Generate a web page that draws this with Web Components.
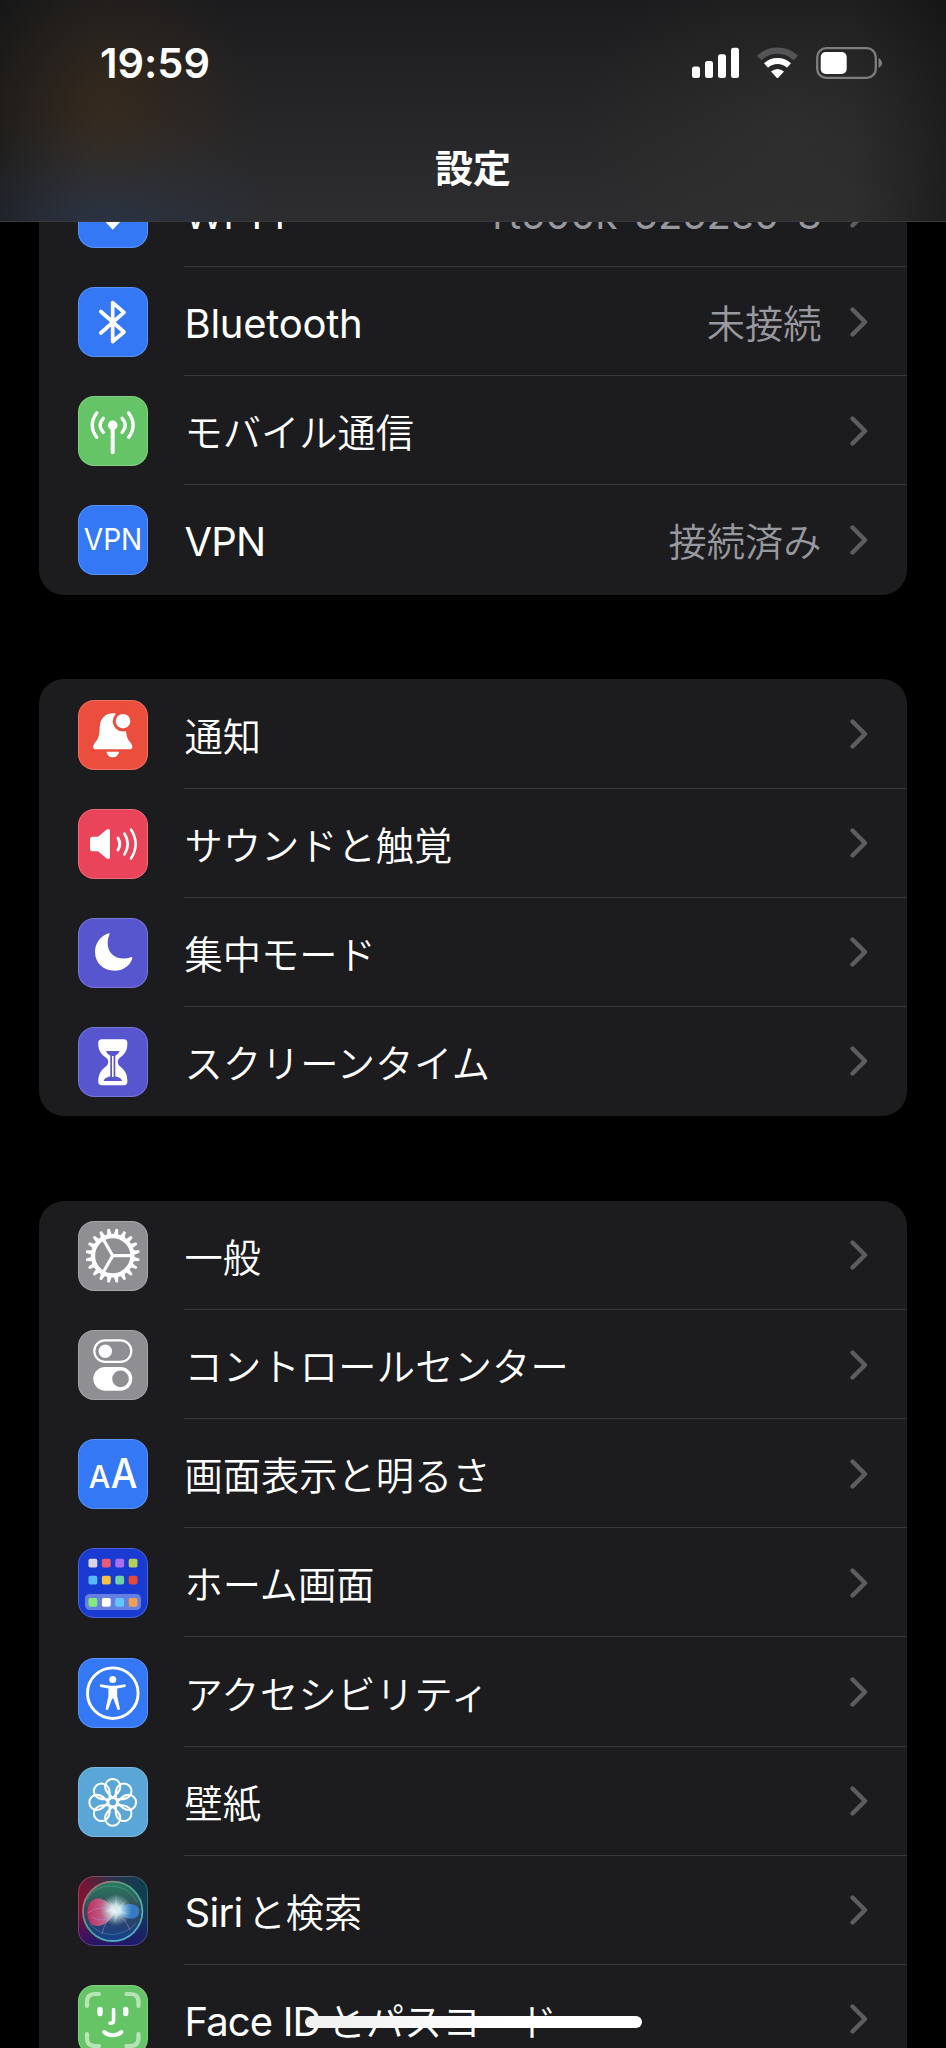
<!DOCTYPE html>
<html lang="ja">
<head>
<meta charset="utf-8">
<title>設定</title>
<style>
html,body{margin:0;background:#000}
body{width:946px;height:2048px;overflow:hidden;font-family:"Noto Sans CJK JP",sans-serif;color:#fff}
</style>
</head>
<body>
<settings-screen>
  <settings-group>
    <settings-row icon="wifi"><latin-text size="40" width="100">Wi-Fi</latin-text><latin-text slot="value" size="40" width="329">rt500k-5252e0-3</latin-text></settings-row>
    <settings-row icon="bluetooth"><latin-text size="40" width="178">Bluetooth</latin-text><span slot="value">未接続</span></settings-row>
    <settings-row icon="cellular">モバイル通信</settings-row>
    <settings-row icon="vpn"><latin-text size="40" width="81">VPN</latin-text><span slot="value">接続済み</span></settings-row>
  </settings-group>
  <settings-group>
    <settings-row icon="bell">通知</settings-row>
    <settings-row icon="sound">サウンドと触覚</settings-row>
    <settings-row icon="moon">集中モード</settings-row>
    <settings-row icon="hourglass" spacing=".3">スクリーンタイム</settings-row>
  </settings-group>
  <settings-group>
    <settings-row icon="gear">一般</settings-row>
    <settings-row icon="toggles" spacing=".2">コントロールセンター</settings-row>
    <settings-row icon="display">画面表示と明るさ</settings-row>
    <settings-row icon="home">ホーム画面</settings-row>
    <settings-row icon="access" spacing=".4">アクセシビリティ</settings-row>
    <settings-row icon="flower">壁紙</settings-row>
    <settings-row icon="siri"><latin-text size="40" width="58" style="margin-right:5px">Siri</latin-text>と検索</settings-row>
    <settings-row icon="face"><latin-text size="40" width="136" style="margin-right:7px">Face ID</latin-text>とパスコード</settings-row>
  </settings-group>
</settings-screen>

<script>
const range = n => Array.from({length:n},(_,i)=>i);
const homeColors = ['#d8d8dc','#ea5a72','#ab70f2','#b6d05c','#57b9f7','#f8bf45','#6cd2a8','#e84a3a','#86ea78','#ffffff','#62c6fa','#f1a052'];
const ICONS = {
wifi:['#3478f6',`<g fill="none" stroke="#fff" stroke-width="5.4"><path d="M14.5 30.5A29 29 0 0 1 55.5 30.5"/><path d="M22 38.5A18.500 18.500 0 0 1 48 38.500"/></g><path d="M27.500 44A10.500 10.500 0 0 1 42 44L34.800 51.700Z" fill="#fff"/>`],
bluetooth:['#3478f6',`<path d="M22.800 24.500L46 45L34.700 54.500V15.700L46 25.300L22.800 46" fill="none" stroke="#fff" stroke-width="3.700" stroke-linecap="round" stroke-linejoin="round"/>`],
cellular:['#65c466',`<circle cx="34.700" cy="29.300" r="4.800" fill="#fff"/><g fill="none" stroke="#fff" stroke-linecap="round" stroke-width="3.400"><path d="M34.700 30V56.300" stroke-width="4"/><path d="M25.300 22.300Q18.700 29.300 25.300 36.300M44.100 22.300Q50.700 29.300 44.100 36.300M18.700 17Q9.800 29.300 18.700 41.300M50.700 17Q59.600 29.300 50.700 41.300"/></g>`],
vpn:['#3478f6',`<text x="5.800" y="45" textLength="58.500" lengthAdjust="spacingAndGlyphs" font-family="Inter,sans-serif" font-size="30" fill="#fff">VPN</text>`],
bell:['#eb4e3d',`<path d="M34.700 13.300C27.500 13.300 22.300 18.600 21.800 26.500C21.500 33.500 21 38 17.500 42C14 46.300 14.500 49.300 18 49.300H51.500C55 49.300 55.500 46.300 52 42C48.400 38 48.200 33.500 47.700 26.500C47.200 18.600 42 13.300 34.700 13.300Z" fill="#fff"/><path d="M28.500 51.700H41.200C40 55.700 38 57.300 34.800 57.300C31.500 57.300 29.500 55.700 28.500 51.700Z" fill="#fff"/><circle cx="45" cy="21.200" r="10.300" fill="#eb4e3d"/><circle cx="45" cy="21.200" r="7.300" fill="#fff"/>`],
sound:['#ea445a',`<path d="M14.500 27.800H20L28.500 20.700C30.500 19.300 32 20 32 22V48C32 50 30.500 50.700 28.500 49.300L20 42.300H14.500Q12 42.300 12 39.800V30.300Q12 27.800 14.500 27.800Z" fill="#fff"/><g fill="none" stroke="#fff" stroke-width="3" stroke-linecap="round"><path d="M40 29Q43.500 35 40 41"/><path d="M46.500 24.800Q53 35 46.500 45.200" stroke-width="2.800"/><path d="M53 20.500Q62.300 35 53 49.500" stroke-width="2.600"/></g>`],
moon:['#5856ce',`<path d="M30.700 15.300C22.500 17.800 17 25.500 17 34C17 44.800 25.500 52.700 36.500 52.700C44.500 52.700 51.500 48.300 54.200 41Q54.900 38.700 52.500 39.200C50 40.300 47.500 40.500 45.500 40.500C36 40.500 29.700 34.500 29.700 25C29.700 22 30.300 19 31.500 16.500Q31.900 15 30.700 15.300Z" fill="#fff"/>`],
hourglass:['#5856ce',`<path d="M24 12.300H45.700Q49.400 12.300 49.400 16C49.400 25 46 27.500 41 31.500Q38.500 34.500 41 38.500C46 42.500 49.400 46 49.400 54.500Q49.400 58.300 45.700 58.300H24Q20.200 58.300 20.200 54.500C20.200 46 24 42.500 29 38.500Q31.500 34.500 29 31.500C24 27.500 20.200 25 20.200 16Q20.200 12.300 24 12.300Z" fill="#fff"/><path d="M28 24H41.700Q40.500 27 37.300 28.800V49.200C42 50.500 43.500 51.500 44 54H25.700C26.200 51.500 28 50.500 32.300 49.200V28.800Q29 27 28 24Z" fill="#5856ce"/><path d="M34.800 29V50" stroke="#fff" stroke-width="1.600"/>`],
gear:['#8e8e93',`<g transform="translate(34.700 34.700)" fill="none" stroke="#fff"><circle r="19.700" stroke-width="4.300"/><path d="M0 0H19M0 0L-9.500-16.500M0 0L-9.500 16.500" stroke-width="3.200"/>${range(20).map(i=>`<path transform="rotate(${i*18+9})" d="M-2.300-21L-1.200-27H1.200L2.300-21Z" fill="#fff" stroke="none"/>`).join('')}</g>`],
toggles:['#8e8e93',`<rect x="16.300" y="10.400" width="37" height="21.400" rx="10.700" fill="none" stroke="#fff" stroke-width="2.200"/><circle cx="27.300" cy="21.300" r="6.700" fill="#fff"/><rect x="15.300" y="37" width="39" height="23.700" rx="11.850" fill="#fff"/><circle cx="42.500" cy="48.900" r="8.300" fill="#8e8e93"/>`],
display:['#3478f6',`<g font-family="Inter,sans-serif" fill="#fff"><text x="10.800" y="49.300" font-size="31" textLength="21.500" lengthAdjust="spacingAndGlyphs" font-weight="500">A</text><text x="32.800" y="49.300" font-size="40.500" textLength="26.700" lengthAdjust="spacingAndGlyphs" font-weight="450">A</text></g>`],
home:['#1a3bd1',`<rect x="7" y="46" width="56" height="16" rx="4.500" fill="#667fe2"/>${homeColors.map((c,i)=>`<rect x="${10.5+(i%4)*13.4}" y="${[10.800,27.800,50][i>>2]}" width="8.800" height="8.800" rx="1.800" fill="${c}"/>`).join('')}`],
access:['#3478f6',`<circle cx="34.800" cy="35.200" r="25.300" fill="none" stroke="#fff" stroke-width="2.900"/><circle cx="34.800" cy="21.600" r="3.500" fill="#fff"/><path d="M22.400 26.200L31.500 27.800H38L47.200 26.200Q48.500 28 47.200 29L39.200 30.500V38L42 51Q41 52.500 39.500 51.700L35.300 40.500H34.300L30 51.700Q28.500 52.500 27.600 51L30.400 38V30.500L22.400 29Q21.100 28 22.400 26.200Z" fill="#fff"/>`],
flower:['#5aa7d7',`<g transform="translate(34.700 35.300)" fill="none" stroke="#fff" stroke-width="2">${range(8).map(i=>`<path transform="rotate(${i*45})" d="M0-4.500C-4-8-7.600-11-7.600-15.800A7.600 7.600 0 0 1 7.600-15.800C7.600-11 4-8 0-4.500Z"/>`).join('')}<circle r="4.300"/></g>`],
siri:['#1c2038',`<defs>
<linearGradient id="bg" x1="0" x2="1"><stop stop-color="#85102f"/><stop offset=".5" stop-color="#28344a"/><stop offset="1" stop-color="#0c4050"/></linearGradient>
<linearGradient id="low" x2="0" y2="1"><stop offset=".45" stop-color="#251080" stop-opacity="0"/><stop offset="1" stop-color="#201070" stop-opacity=".85"/></linearGradient>
<linearGradient id="orb" x2="0" y2="1"><stop stop-color="#287c60"/><stop offset=".5" stop-color="#354658"/><stop offset="1" stop-color="#143f91"/></linearGradient>
<linearGradient id="rim" x2="1" y2="1"><stop stop-color="#d05a68"/><stop offset=".45" stop-color="#4aa889"/><stop offset="1" stop-color="#56b3d8"/></linearGradient>
<radialGradient id="glow"><stop stop-color="#fff"/><stop offset=".3" stop-color="#e9fcff" stop-opacity=".95"/><stop offset="1" stop-color="#a2dce4" stop-opacity="0"/></radialGradient>
<linearGradient id="pink"><stop stop-color="#d72961"/><stop offset="1" stop-color="#d796b2"/></linearGradient></defs>
<rect width="70" height="70" fill="url(#bg)"/><rect width="70" height="70" fill="url(#low)"/>
<circle cx="34.700" cy="35.300" r="29.700" fill="url(#orb)" stroke="url(#rim)" stroke-width="1.800"/>
<path d="M9 24C18 5 48 5 59 26M12 48C24 62 45 62 58 47" stroke="#6dc5aa" stroke-opacity=".35" fill="none"/>
<path d="M38 35C32 27 26 22 19 22.500C7 24 6 46 16 49.500C27 52 33 43 38 35Z" fill="url(#pink)" opacity=".85"/>
<path d="M38 35C45 27 57 25 61 33C63 44 50 47 38 35Z" fill="#3688dc" opacity=".8"/>
<path d="M10 37Q22 27 38 36Q29 49 13 41M38 35Q27 44 24 58M38 36Q47 42 52 54" fill="none" stroke="#b494d1" opacity=".5"/>
<circle cx="38" cy="34" r="16" fill="url(#glow)" opacity=".85"/><path d="M38 18L39.500 31L48 25L41.500 34L51 38L41 37L37 47L36 37L26 35L35 32L29 23L37 30Z" fill="#e8fff9" opacity=".3"/>`],
face:['#65c466',`<g fill="none" stroke="#fff" stroke-linecap="round"><path d="M9 21V17Q9 9 17 9H21M48.500 9H52.500Q60.500 9 60.500 17V21M9 49V53Q9 61 17 61H21M48.500 61H52.500Q60.500 61 60.500 53V49" stroke-width="4.200" stroke="#b6e4b6"/><path d="M22 24.500V28.500M47.700 24.500V28.500" stroke-width="5.400"/><path d="M35.600 24.500V35.500Q35.600 38.300 32 38.300" stroke-width="3.600"/><path d="M26.200 47C30.500 51.300 39 51.300 43.400 47" stroke-width="4"/></g>`]
};

function define(name, markup, prepare){
  const t=document.createElement('template'); t.innerHTML=markup;
  customElements.define(name,class extends HTMLElement{
    connectedCallback(){
      if(this.shadowRoot)return;
      const content=t.content.cloneNode(true);
      if(prepare)prepare(this,content);
      this.attachShadow({mode:'open'}).append(content);
    }
  });
}

/* Latin runs use Inter; width sets the advance of the whole run through letter spacing. */
define('latin-text',`<style>:host{display:inline-block;white-space:nowrap;font-family:Inter,sans-serif;font-weight:400;line-height:1}</style><slot></slot>`,el=>{
  const size=el.getAttribute('size')||40, weight=el.getAttribute('weight')||400;
  el.style.fontSize=size+'px';
  el.style.fontWeight=weight;
  const want=+el.getAttribute('width');
  if(want){
    const c=document.createElement('canvas').getContext('2d');
    c.font=`${weight} ${size}px Inter`;
    el.style.letterSpacing=((want-c.measureText(el.textContent).width)/el.textContent.length).toFixed(3)+'px';
  }
});

define('app-icon',`<style>:host{display:block;flex:none;width:70px;height:70px;border-radius:16px;overflow:hidden;position:relative}svg{display:block}:host::after{content:"";position:absolute;inset:0;border-radius:16px;box-shadow:inset 0 0 0 1px rgba(255,255,255,.2)}</style><div class="art"></div>`,(el,content)=>{
  const [bg,art]=ICONS[el.getAttribute('name')];
  el.style.background=bg;
  content.querySelector('.art').innerHTML=`<svg width="70" height="70" viewBox="0 0 70 70">${art}</svg>`;
});

define('settings-row',`<style>
:host{display:flex;height:109.15px;padding-left:39px;box-sizing:border-box;align-items:center;gap:36px}
app-icon{margin-top:1px}
.body{flex:1;height:100%;box-sizing:border-box;display:flex;align-items:center;border-bottom:1px solid var(--line,#38383a);padding:2px 39.5px 0 .5px}
.label,.value{font-size:38.25px;line-height:54px;font-weight:350;white-space:nowrap}
.label{flex:1}
.value{color:#98989f;margin-right:28px}
svg{display:block;flex:none;margin-top:-1px}
:host(:last-of-type){--line:transparent}
</style><app-icon></app-icon><div class="body"><div class="label"><slot></slot></div><div class="value"><slot name="value"></slot></div><svg width="18" height="30" viewBox="0 0 18 30"><path d="M2.500 2.500L15 15L2.500 27.500" fill="none" stroke="#5d5d60" stroke-width="4.400" stroke-linecap="round" stroke-linejoin="round"/></svg></div>`,(el,content)=>{
  content.querySelector('app-icon').setAttribute('name',el.getAttribute('icon'));
  content.querySelector('.label').style.letterSpacing=(el.getAttribute('spacing')||0)+'px';
});

define('settings-group',`<style>:host{display:block;background:#1c1c1e;border-radius:25px;overflow:hidden}</style><slot></slot>`);

define('status-bar',`<style>
:host{display:flex;justify-content:space-between;align-items:center;height:126px;box-sizing:border-box;padding:0 63px 0 100px}
latin-text{margin-top:1px}
.icons{display:flex;align-items:center;gap:18px}svg{display:block}
</style><latin-text size="41.500" weight="600" width="110">19:59</latin-text>
<div class="icons">
<svg width="47" height="32" viewBox="0 0 47 32" fill="#fff"><rect y="19.500" width="8" height="11.500" rx="2.500"/><rect x="13" y="14" width="8" height="17" rx="2.500"/><rect x="26" y="7.200" width="8" height="23.800" rx="2.500"/><rect x="39" y=".8" width="8" height="30.200" rx="2.500"/></svg>
<svg width="41" height="32" viewBox="0 0 41 32"><g fill="none"><path d="M2.200 11A26.500 26.500 0 0 1 38.800 11" stroke="#555557" stroke-width="6.400"/><path d="M9 18.500A17 17 0 0 1 32 18.500" stroke="#fff" stroke-width="6"/></g><path d="M14 24.500Q20.500 19.500 27 24.500L21.500 30.400Q20.500 31.400 19.500 30.400Z" fill="#fff"/></svg>
<svg width="67" height="32" viewBox="0 0 67 32"><rect x="1.200" y="1.200" width="58.600" height="29.600" rx="9" fill="none" stroke="#7e7e80" stroke-width="2.300"/><rect x="4.700" y="5" width="26" height="22" rx="5" fill="#fff"/><path d="M62.500 11Q66 13 66 16T62.500 21Z" fill="#7e7e80"/></svg>
</div>`);

define('nav-header',`<style>
:host{position:absolute;z-index:2;top:0;left:0;width:946px;height:222px;box-sizing:border-box;border-bottom:1px solid #39393b;display:block;
background:radial-gradient(circle 150px at 108px 105px,rgba(67,45,20,.55),rgba(67,45,20,.2) 55%,transparent),radial-gradient(ellipse 170px 110px at 105px 222px,rgba(35,55,87,.65),rgba(35,55,87,.2) 60%,transparent),radial-gradient(ellipse 210px 170px at 790px 125px,rgba(57,56,52,.4),transparent),linear-gradient(90deg,rgba(18,18,18,.55),transparent 10%,transparent 90%,rgba(18,18,18,.6)),linear-gradient(#1c1c1e,#272729 60%,#2d2d2f)}
.title{text-align:center;font-size:38px;font-weight:700;line-height:56px;margin-top:12px}
</style><status-bar></status-bar><div class="title">設定</div>`);

define('home-indicator',`<style>:host{position:absolute;z-index:3;left:305px;top:2016px;width:337px;height:12px;border-radius:6px;background:linear-gradient(90deg,#f0f0f1,#fff 60%)}</style>`);

define('settings-screen',`<style>
:host{display:block;position:relative;width:946px;height:2048px;overflow:hidden;background:#000}
main{display:flex;flex-direction:column;gap:84.9px;padding:158px 39px 0}
</style><nav-header></nav-header><main><slot></slot></main><home-indicator></home-indicator>`);
</script>
</body>
</html>
